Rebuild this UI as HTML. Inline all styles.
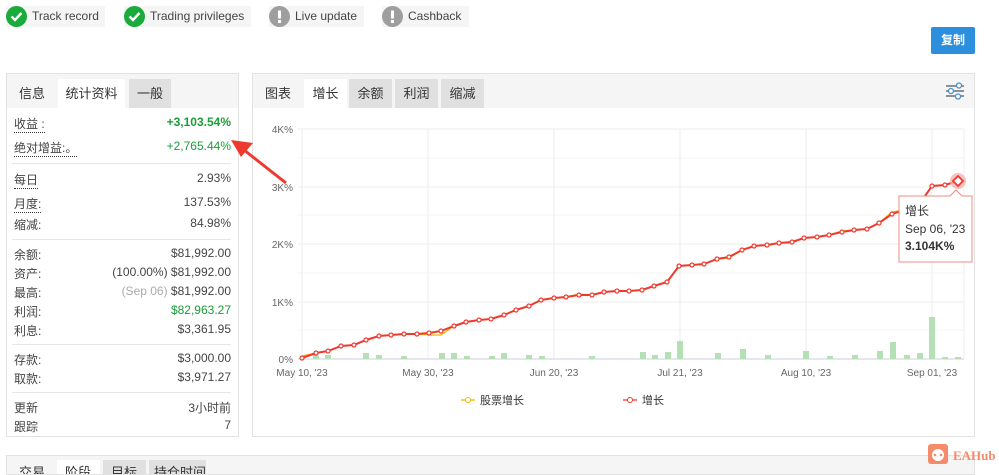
<!DOCTYPE html>
<html><head><meta charset="utf-8"><style>
*{box-sizing:border-box;margin:0;padding:0}
body{width:999px;height:470px;overflow:hidden;background:#fff;font-family:"Liberation Sans","Noto Sans CJK SC",sans-serif;color:#333;font-size:12px;position:relative}
.abs{position:absolute}
.badge{position:absolute;top:6px;height:21px;background:#f5f5f5;font-size:12px;line-height:21px;color:#444;padding-left:26px;white-space:nowrap}
.badge .ic{position:absolute;left:0;top:0;width:21px;height:21px;border-radius:50%}
.panel{position:absolute;border:1px solid #e2e2e2;background:#fff}
.tabs{height:34px;background:#f5f5f5;position:relative}
.tab{position:absolute;top:5px;height:29px;line-height:29px;font-size:13px;color:#333;text-align:center;white-space:nowrap}
.row{position:absolute;left:7px;right:7px;font-size:12px;color:#444;white-space:nowrap}
.row .l{position:absolute;left:0}
.row .r{position:absolute;right:0}
.dot{border-bottom:1px dotted #333}
.hr{position:absolute;left:5px;right:7px;height:1px;background:#e6e6e6}
.g{color:#1a9e3a}
</style></head><body>

<div class="badge" style="left:6px;width:99px"><div class="ic" style="background:#1bab3c"><svg width="21" height="21"><path d="M5.5 10.5l3.5 3.5 6.5-7" stroke="#fff" stroke-width="2.4" fill="none"/></svg></div>Track record</div>
<div class="badge" style="left:124px;width:127px"><div class="ic" style="background:#1bab3c"><svg width="21" height="21"><path d="M5.5 10.5l3.5 3.5 6.5-7" stroke="#fff" stroke-width="2.4" fill="none"/></svg></div>Trading privileges</div>
<div class="badge" style="left:269px;width:95px"><div class="ic" style="background:#9e9e9e"><svg width="21" height="21"><rect x="9" y="4.5" width="3" height="8" fill="#fff"/><rect x="9" y="14" width="3" height="3" fill="#fff"/></svg></div>Live update</div>
<div class="badge" style="left:382px;width:87px"><div class="ic" style="background:#9e9e9e"><svg width="21" height="21"><rect x="9" y="4.5" width="3" height="8" fill="#fff"/><rect x="9" y="14" width="3" height="3" fill="#fff"/></svg></div>Cashback</div>

<div class="abs" style="left:931px;top:27px;width:44px;height:27px;background:#2b8fde;color:#fff;font-size:12px;line-height:27px;text-align:center;border-radius:2px;font-weight:bold">复制</div>

<div class="panel" style="left:6px;top:73px;width:233px;height:364px">
<div class="tabs">
<div class="tab" style="left:2px;width:46px">信息</div>
<div class="tab" style="left:51px;width:67px;background:#fff">统计资料</div>
<div class="tab" style="left:122px;width:42px;background:#e0e0e0">一般</div>
</div>
<div class="row" style="top:41px"><span class="l dot">收益 :</span><span class="r g" style="font-weight:bold">+3,103.54%</span></div>
<div class="row" style="top:65px"><span class="l dot">绝对增益:。</span><span class="r g">+2,765.44%</span></div>
<div class="hr" style="top:89px"></div>
<div class="row" style="top:97px"><span class="l dot">每日</span><span class="r">2.93%</span></div>
<div class="row" style="top:121px"><span class="l dot">月度:</span><span class="r">137.53%</span></div>
<div class="row" style="top:142px"><span class="l">缩减:</span><span class="r">84.98%</span></div>
<div class="hr" style="top:165px"></div>
<div class="row" style="top:172px"><span class="l">余额:</span><span class="r">$81,992.00</span></div>
<div class="row" style="top:191px"><span class="l">资产:</span><span class="r">(100.00%) $81,992.00</span></div>
<div class="row" style="top:210px"><span class="l">最高:</span><span class="r"><span style="color:#aaa">(Sep 06)</span> $81,992.00</span></div>
<div class="row" style="top:229px"><span class="l">利润:</span><span class="r g">$82,963.27</span></div>
<div class="row" style="top:248px"><span class="l">利息:</span><span class="r">$3,361.95</span></div>
<div class="hr" style="top:270px"></div>
<div class="row" style="top:277px"><span class="l">存款:</span><span class="r">$3,000.00</span></div>
<div class="row" style="top:296px"><span class="l">取款:</span><span class="r">$3,971.27</span></div>
<div class="hr" style="top:318px"></div>
<div class="row" style="top:325px"><span class="l">更新</span><span class="r">3小时前</span></div>
<div class="row" style="top:344px"><span class="l">跟踪</span><span class="r">7</span></div>
</div>

<div class="panel" style="left:252px;top:73px;width:723px;height:364px">
<div class="tabs">
<div class="tab" style="left:2px;width:46px">图表</div>
<div class="tab" style="left:51px;width:43px;background:#fff">增长</div>
<div class="tab" style="left:96px;width:43px;background:#e0e0e0">余额</div>
<div class="tab" style="left:142px;width:43px;background:#e0e0e0">利润</div>
<div class="tab" style="left:188px;width:43px;background:#e0e0e0">缩减</div>
<svg class="abs" style="left:692px;top:8px" width="20" height="18"><g stroke="#555" stroke-width="1.3" fill="#fff"><line x1="1" y1="4" x2="19" y2="4"/><line x1="1" y1="9" x2="19" y2="9"/><line x1="1" y1="14" x2="19" y2="14"/><circle cx="14" cy="3.5" r="2.5" stroke="#4a8fd0"/><circle cx="6" cy="9" r="2.5" stroke="#4a8fd0"/><circle cx="13" cy="14.5" r="2.5" stroke="#4a8fd0"/></g></svg>
</div>
</div>

<div class="abs" style="left:6px;top:455px;width:969px;height:20px;background:#f5f5f5;border:1px solid #e2e2e2;overflow:hidden;white-space:nowrap">
<div class="abs" style="left:12px;top:6px;font-size:13px">交易</div>
<div class="abs" style="left:50px;top:4px;width:43px;height:20px;background:#fff;font-size:13px;padding:2px 8px">阶段</div>
<div class="abs" style="left:96px;top:4px;width:43px;height:20px;background:#e0e0e0;font-size:13px;padding:2px 8px">目标</div>
<div class="abs" style="left:142px;top:4px;width:57px;height:20px;background:#e0e0e0;font-size:13px;padding:2px 5px">持仓时间</div>
</div>

<svg class="abs" style="left:0;top:0" width="999" height="470">
<g stroke="#eeeeee" stroke-width="1">
<line x1="298" y1="129" x2="964" y2="129"/><line x1="298" y1="187" x2="964" y2="187"/><line x1="298" y1="244" x2="964" y2="244"/><line x1="298" y1="302" x2="964" y2="302"/>
<line x1="298" y1="158" x2="964" y2="158" stroke="#f6f6f6"/><line x1="298" y1="215" x2="964" y2="215" stroke="#f6f6f6"/><line x1="298" y1="273" x2="964" y2="273" stroke="#f6f6f6"/><line x1="298" y1="330" x2="964" y2="330" stroke="#f6f6f6"/>
<line x1="302" y1="129" x2="302" y2="359"/><line x1="428" y1="129" x2="428" y2="359"/><line x1="554" y1="129" x2="554" y2="359"/><line x1="680" y1="129" x2="680" y2="359"/><line x1="806" y1="129" x2="806" y2="359"/><line x1="932" y1="129" x2="932" y2="359"/><line x1="964" y1="129" x2="964" y2="359"/>
</g>
<line x1="298" y1="359" x2="964" y2="359" stroke="#ccd"/>
<g fill="#b5e0b5">
<rect x="313" y="355" width="6" height="4"/><rect x="325" y="355" width="6" height="4"/><rect x="363" y="353" width="6" height="6"/><rect x="376" y="355" width="6" height="4"/><rect x="401" y="356" width="6" height="3"/><rect x="439" y="353" width="6" height="6"/><rect x="451" y="353" width="6" height="6"/><rect x="464" y="356" width="6" height="3"/><rect x="489" y="356" width="6" height="3"/><rect x="501" y="353" width="6" height="6"/><rect x="526" y="355" width="6" height="4"/><rect x="539" y="356" width="6" height="3"/><rect x="589" y="356" width="6" height="3"/><rect x="640" y="352" width="6" height="7"/><rect x="652" y="355" width="6" height="4"/><rect x="665" y="352" width="6" height="7"/><rect x="677" y="341" width="6" height="18"/><rect x="715" y="353" width="6" height="6"/><rect x="740" y="349" width="6" height="10"/><rect x="765" y="355" width="6" height="4"/><rect x="803" y="351" width="6" height="8"/><rect x="827" y="356" width="6" height="3"/><rect x="852" y="355" width="6" height="4"/><rect x="877" y="351" width="6" height="8"/><rect x="890" y="342" width="6" height="17"/><rect x="904" y="355" width="6" height="4"/><rect x="917" y="353" width="6" height="6"/><rect x="929" y="317" width="6" height="42"/><rect x="942" y="357" width="6" height="2"/><rect x="955" y="357" width="6" height="2"/>
</g>
<polyline fill="none" stroke="#f5b800" stroke-width="1.3" points="302,356 316,353 328,351 341,346 354,345 366,340 379,336 391,335 404,334 417,334 429,335 441,335 454,326 466,322 479,320 491,319 504,315 516,310 529,306 541,300 554,298 566,297 579,294 592,295 604,292 617,291 629,291 642,290 654,286 667,282 679,266 692,265 704,264 717,259 729,258 742,250 754,246 767,245 779,243 792,243 804,238 817,237 829,235 842,231 854,230 867,229 879,223 892,212 904,210"/>
<polyline fill="none" stroke="#ee3a2e" stroke-width="2" points="302,358 316,353 328,351 341,346 354,345 366,340 379,336 391,335 404,334 417,334 429,333 441,331 454,326 466,322 479,320 491,319 504,315 516,310 529,306 541,300 554,298 566,297 579,295 592,295 604,292 617,291 629,291 642,290 654,286 667,282 679,266 692,265 704,264 717,259 729,257 742,250 754,246 767,245 779,243 792,242 804,238 817,237 829,235 842,232 854,230 867,229 879,223 892,214 904,210 918,206 932,186 945,185 958,181"/>
<g fill="#fff" stroke="#ee3a2e" stroke-width="1.2">
<circle cx="302" cy="358" r="2"/><circle cx="316" cy="353" r="2"/><circle cx="328" cy="351" r="2"/><circle cx="341" cy="346" r="2"/><circle cx="354" cy="345" r="2"/><circle cx="366" cy="340" r="2"/><circle cx="379" cy="336" r="2"/><circle cx="391" cy="335" r="2"/><circle cx="404" cy="334" r="2"/><circle cx="417" cy="334" r="2"/><circle cx="429" cy="333" r="2"/><circle cx="441" cy="331" r="2"/><circle cx="454" cy="326" r="2"/><circle cx="466" cy="322" r="2"/><circle cx="479" cy="320" r="2"/><circle cx="491" cy="319" r="2"/><circle cx="504" cy="315" r="2"/><circle cx="516" cy="310" r="2"/><circle cx="529" cy="306" r="2"/><circle cx="541" cy="300" r="2"/><circle cx="554" cy="298" r="2"/><circle cx="566" cy="297" r="2"/><circle cx="579" cy="295" r="2"/><circle cx="592" cy="295" r="2"/><circle cx="604" cy="292" r="2"/><circle cx="617" cy="291" r="2"/><circle cx="629" cy="291" r="2"/><circle cx="642" cy="290" r="2"/><circle cx="654" cy="286" r="2"/><circle cx="667" cy="282" r="2"/><circle cx="679" cy="266" r="2"/><circle cx="692" cy="265" r="2"/><circle cx="704" cy="264" r="2"/><circle cx="717" cy="259" r="2"/><circle cx="729" cy="257" r="2"/><circle cx="742" cy="250" r="2"/><circle cx="754" cy="246" r="2"/><circle cx="767" cy="245" r="2"/><circle cx="779" cy="243" r="2"/><circle cx="792" cy="242" r="2"/><circle cx="804" cy="238" r="2"/><circle cx="817" cy="237" r="2"/><circle cx="829" cy="235" r="2"/><circle cx="842" cy="232" r="2"/><circle cx="854" cy="230" r="2"/><circle cx="867" cy="229" r="2"/><circle cx="879" cy="223" r="2"/><circle cx="892" cy="214" r="2"/><circle cx="932" cy="186" r="2"/><circle cx="945" cy="185" r="2"/>
</g>
<circle cx="958" cy="181" r="8" fill="#f4b4b0" opacity="0.8"/>
<path d="M958 176l5 5-5 5-5-5z" fill="#fff" stroke="#ee3a2e" stroke-width="1.8"/>
<path d="M899 196h51l6-6 6 6h10v66h-73z" fill="#fff" stroke="#ef8b85" stroke-width="1"/>
<text x="905" y="215" font-size="12" fill="#333" font-family="Liberation Sans,Noto Sans CJK SC,sans-serif">增长</text>
<text x="905" y="233" font-size="12" fill="#333" font-family="Liberation Sans,sans-serif">Sep 06, '23</text>
<text x="905" y="250" font-size="12" fill="#333" font-weight="bold" font-family="Liberation Sans,sans-serif">3.104K%</text>
<g font-size="10" fill="#666" font-family="Liberation Sans,sans-serif" text-anchor="end">
<text x="293" y="133">4K%</text><text x="293" y="191">3K%</text><text x="293" y="248">2K%</text><text x="293" y="306">1K%</text><text x="293" y="363">0%</text>
</g>
<g font-size="10" fill="#666" font-family="Liberation Sans,sans-serif" text-anchor="middle">
<text x="302" y="376">May 10, '23</text><text x="428" y="376">May 30, '23</text><text x="554" y="376">Jun 20, '23</text><text x="680" y="376">Jul 21, '23</text><text x="806" y="376">Aug 10, '23</text><text x="932" y="376">Sep 01, '23</text>
</g>
<line x1="461" y1="400" x2="475" y2="400" stroke="#f5b800" stroke-width="1.3"/><circle cx="468" cy="400" r="2.5" fill="#fff" stroke="#f5b800"/>
<text x="480" y="404" font-size="11" fill="#333" font-family="Noto Sans CJK SC,sans-serif">股票增长</text>
<line x1="623" y1="400" x2="637" y2="400" stroke="#ee3a2e" stroke-width="1.3"/><circle cx="630" cy="400" r="2.5" fill="#fff" stroke="#ee3a2e"/>
<text x="642" y="404" font-size="11" fill="#333" font-family="Noto Sans CJK SC,sans-serif">增长</text>
<line x1="286" y1="183" x2="244" y2="150" stroke="#ee3a2e" stroke-width="3"/>
<path d="M231 140l22 3-12 14z" fill="#ee3a2e"/>
<rect x="928" y="444" width="20" height="20" rx="3" fill="#f58b6a"/>
<circle cx="938" cy="455" r="6" fill="#fff"/><circle cx="935" cy="455" r="1.3" fill="#f58b6a"/><circle cx="941" cy="455" r="1.3" fill="#f58b6a"/>
<text x="953" y="460" font-size="13" font-weight="bold" fill="#f58b6a" font-family="Liberation Serif,serif">EAHub</text>
</svg>
</body></html>
